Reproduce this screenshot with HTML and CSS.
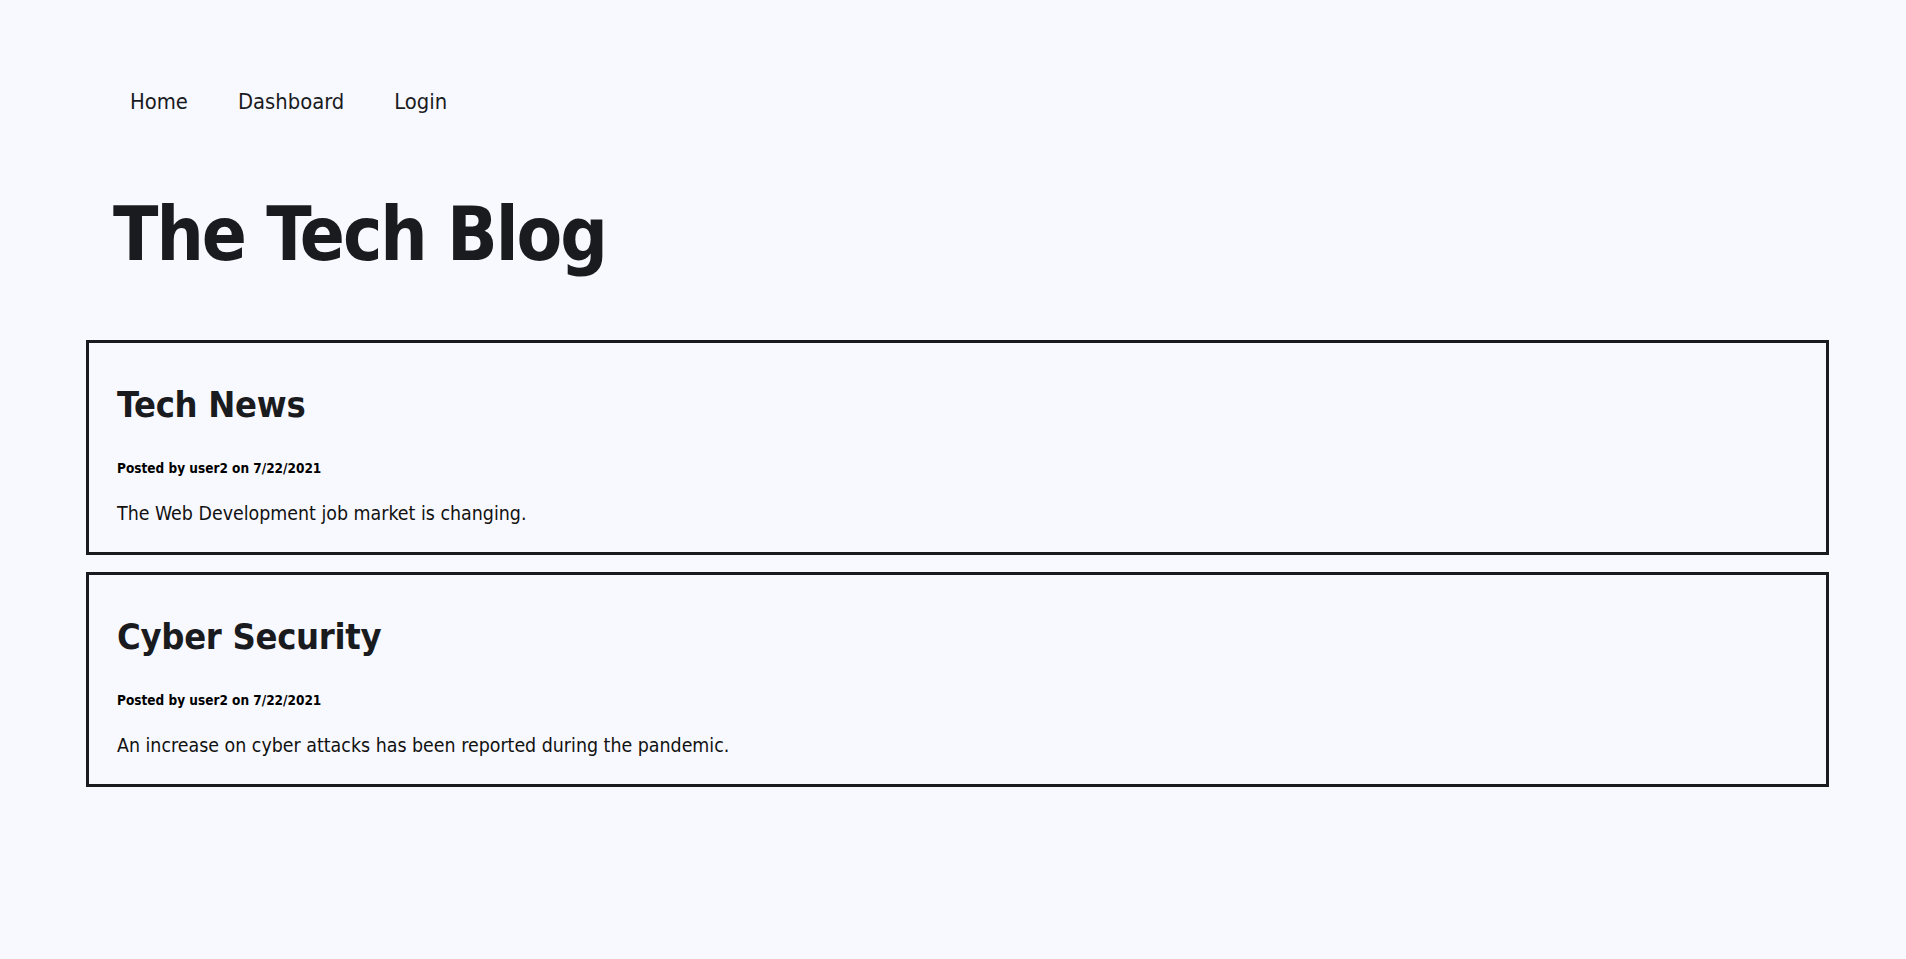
FILE: index.html
```html
<!DOCTYPE html>
<html lang="en">
<head>
<meta charset="utf-8">
<title>The Tech Blog</title>
<link rel="stylesheet" href="styles.css">
</head>
<body>
<div class="page">
  <nav class="nav">
    <a class="nav-link" href="#">Home</a>
    <a class="nav-link" href="#">Dashboard</a>
    <a class="nav-link" href="#">Login</a>
  </nav>
  <header class="hero">
    <h1 class="hero-title">The Tech Blog</h1>
  </header>
  <main class="posts">
    <article class="post">
      <h2 class="post-title">Tech News</h2>
      <p class="post-meta">Posted by user2 on 7/22/2021</p>
      <p class="post-body">The Web Development job market is changing.</p>
    </article>
    <article class="post">
      <h2 class="post-title">Cyber Security</h2>
      <p class="post-meta">Posted by user2 on 7/22/2021</p>
      <p class="post-body">An increase on cyber attacks has been reported during the pandemic.</p>
    </article>
  </main>
</div>
</body>
</html>
```
FILE: styles.css
```css
* { box-sizing: border-box; }
html, body {
  margin: 0;
  padding: 0;
  background: #f8f9fe;
}
body {
  font-family: "DejaVu Sans Condensed", "DejaVu Sans", sans-serif;
  font-stretch: condensed;
  color: #1a1b1e;
}
.page {
  padding: 89px 77px 40px 86px;
}
.nav {
  display: flex;
  gap: 50px;
  padding-left: 44px;
}
.nav-link {
  font-size: 21.8px;
  line-height: 26px;
  color: #1a1b1e;
  text-decoration: none;
}
.hero {
  padding: 80px 0 0 27px;
}
.hero-title {
  margin: 0;
  font-size: 74px;
  line-height: 78px;
  letter-spacing: -2px;
  font-weight: bold;
}
.posts {
  display: flex;
  flex-direction: column;
  gap: 17px;
  margin-top: 67px;
}
.post {
  border: 3px solid #1a1b1e;
  padding: 41px 28px 26px;
}
.post-title {
  margin: 0;
  font-size: 36px;
  line-height: 42px;
  font-weight: bold;
  letter-spacing: -0.3px;
}
.post-meta {
  margin: 34px 0 0;
  font-size: 13.5px;
  line-height: 16px;
  font-weight: bold;
  color: #000;
}
.post-body {
  margin: 26px 0 0;
  font-size: 19.4px;
  line-height: 24px;
  color: #111;
}
```
